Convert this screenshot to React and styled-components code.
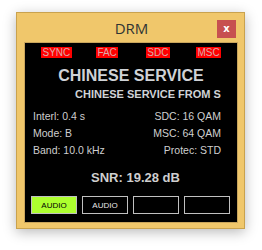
import React from "react";
import styled, { createGlobalStyle } from "styled-components";

const GlobalStyle = createGlobalStyle`
  html, body {
    margin: 0;
    padding: 0;
    background: #ffffff;
  }
  body {
    font-family: "Liberation Sans", Arial, sans-serif;
  }
`;

const Page = styled.div`
  width: 262px;
  height: 250px;
  padding: 12px 0 0 16px;
  box-sizing: border-box;
`;

const Window = styled.div`
  width: 229px;
  height: 217px;
  box-sizing: border-box;
  background: #f0c76b;
  border: 1px solid #c9a24e;
  box-shadow: 0 3px 12px rgba(0, 0, 0, 0.28);
  display: flex;
  flex-direction: column;
  padding: 0 6px 5px 7px;
`;

const TitleBar = styled.div`
  display: grid;
  grid-template-columns: 1fr auto 1fr;
  align-items: center;
  height: 29px;
  padding-top: 1px;
  box-sizing: border-box;
`;

const Title = styled.div`
  grid-column: 2;
  font-family: "Open Sans", "Noto Sans", sans-serif;
  font-size: 15px;
  color: #2f3434;
  margin-left: 1px;
`;

const CloseButton = styled.div`
  grid-column: 3;
  justify-self: end;
  width: 19px;
  height: 18px;
  margin-right: 2px;
  margin-top: 1px;
  background: #c75050;
  color: #ffffff;
  font-family: "DejaVu Sans", sans-serif;
  font-weight: bold;
  font-size: 10px;
  display: flex;
  align-items: center;
  justify-content: center;
  line-height: 1;
`;

const Panel = styled.div`
  flex: 1;
  background: #000000;
  border: 1px solid #c9a55c;
  display: flex;
  flex-direction: column;
  color: #cfcfcf;
  overflow: hidden;
`;

const StatusRow = styled.div`
  display: grid;
  grid-template-columns: repeat(4, 1fr);
  padding: 4px 3px 0 6px;
  justify-items: center;
`;

const Badge = styled.span`
  background: #ff0000;
  color: #dcaaaa;
  font-size: 10px;
  height: 11px;
  line-height: 11px;
  padding: 0 1.5px;
`;

const ServiceName = styled.div`
  margin-top: 9px;
  text-align: center;
  font-weight: bold;
  font-size: 16px;
  color: #cfd2d6;
  line-height: 18px;
`;

const ServiceLabel = styled.div`
  margin-top: 3px;
  padding-left: 50px;
  font-weight: bold;
  font-size: 11px;
  line-height: 13px;
  white-space: nowrap;
  overflow: hidden;
  color: #cfd2d6;
`;

const InfoGrid = styled.div`
  margin-top: 7px;
  display: grid;
  grid-template-columns: 1fr 1fr;
  padding: 0 16px 0 8px;
  font-size: 10.5px;
  line-height: 17px;
`;

const InfoCell = styled.div`
  text-align: ${({ $right }) => ($right ? "right" : "left")};
  white-space: nowrap;
`;

const Snr = styled.div`
  margin-top: 11px;
  padding-left: 9px;
  text-align: center;
  font-weight: bold;
  font-size: 13px;
  line-height: 15px;
`;

const ButtonRow = styled.div`
  margin-top: 11px;
  display: flex;
  gap: 5px;
  padding-left: 6px;
`;

const AudioButton = styled.div`
  width: 46px;
  height: 18px;
  box-sizing: border-box;
  border: 1px solid #c0c0c0;
  background: ${({ $active }) => ($active ? "#adff2f" : "#000000")};
  color: ${({ $active }) => ($active ? "#000000" : "#e6e6e6")};
  font-size: 8px;
  display: flex;
  align-items: center;
  justify-content: center;
  padding-top: 1px;
`;

const info = [
  ["Interl: 0.4 s", "SDC: 16 QAM"],
  ["Mode: B", "MSC: 64 QAM"],
  ["Band: 10.0 kHz", "Protec: STD"],
];

export default function App() {
  return (
    <>
      <GlobalStyle />
      <Page>
        <Window>
          <TitleBar>
            <Title>DRM</Title>
            <CloseButton>x</CloseButton>
          </TitleBar>
          <Panel>
            <StatusRow>
              <Badge>SYNC</Badge>
              <Badge>FAC</Badge>
              <Badge>SDC</Badge>
              <Badge>MSC</Badge>
            </StatusRow>
            <ServiceName>CHINESE SERVICE</ServiceName>
            <ServiceLabel>CHINESE SERVICE FROM S</ServiceLabel>
            <InfoGrid>
              {info.map(([l, r]) => (
                <React.Fragment key={l}>
                  <InfoCell>{l}</InfoCell>
                  <InfoCell $right>{r}</InfoCell>
                </React.Fragment>
              ))}
            </InfoGrid>
            <Snr>SNR: 19.28 dB</Snr>
            <ButtonRow>
              <AudioButton $active>AUDIO</AudioButton>
              <AudioButton>AUDIO</AudioButton>
              <AudioButton />
              <AudioButton />
            </ButtonRow>
          </Panel>
        </Window>
      </Page>
    </>
  );
}
